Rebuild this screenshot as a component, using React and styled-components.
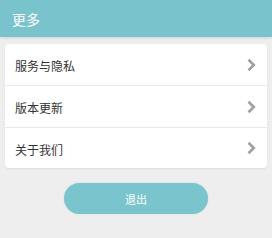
import styled, { createGlobalStyle } from "styled-components";

const GlobalStyle = createGlobalStyle`
  html, body {
    margin: 0;
    padding: 0;
    background: #eeeeee;
  }
  body {
    font-family: "Noto Sans CJK SC", "Liberation Sans", sans-serif;
  }
`;

const items = ["服务与隐私", "版本更新", "关于我们"];

const Chevron = () => (
  <svg width="9" height="14" viewBox="0 0 9 14">
    <polyline
      points="1.5,1.8 6.8,7 1.5,12.2"
      fill="none"
      stroke="#a0a0a0"
      strokeWidth="2.6"
    />
  </svg>
);

export default function App() {
  return (
    <>
      <GlobalStyle />
      <Page>
        <Header>更多</Header>
        <Card>
          {items.map((label, i) => (
            <Row key={label} last={i === items.length - 1}>
              <Label>{label}</Label>
              <Chevron />
            </Row>
          ))}
        </Card>
        <ButtonWrap>
          <LogoutButton>退出</LogoutButton>
        </ButtonWrap>
      </Page>
    </>
  );
}

const Page = styled.div`
  width: 272px;
  height: 238px;
  background: #eeeeee;
  display: flex;
  flex-direction: column;
`;

const Header = styled.div`
  height: 37px;
  background: #79c3cd;
  color: #ffffff;
  font-size: 14px;
  display: flex;
  align-items: center;
  padding-left: 12px;
  box-shadow: 0 1px 3px rgba(0, 0, 0, 0.12);
`;

const Card = styled.div`
  margin: 7px 5px 0;
  background: #ffffff;
  border-radius: 4px;
  box-shadow: 0 1px 2px rgba(0, 0, 0, 0.08);
  display: flex;
  flex-direction: column;
`;

const Row = styled.div`
  height: 41px;
  display: flex;
  align-items: center;
  justify-content: space-between;
  padding: 0 11px 0 10px;
  border-bottom: ${(p) => (p.last ? "none" : "1px solid #eaeaea")};
  &:last-child {
    height: 40px;
  }
`;

const Label = styled.span`
  font-size: 12px;
  color: #333333;
  padding-top: 2px;
`;

const ButtonWrap = styled.div`
  display: flex;
  justify-content: center;
  margin-top: 15px;
`;

const LogoutButton = styled.div`
  width: 144px;
  height: 31px;
  border-radius: 16px;
  background: #7ac4cd;
  color: #ffffff;
  font-size: 11px;
  display: flex;
  align-items: center;
  justify-content: center;
  box-shadow: 0 0 2px rgba(0, 0, 0, 0.1);
`;
